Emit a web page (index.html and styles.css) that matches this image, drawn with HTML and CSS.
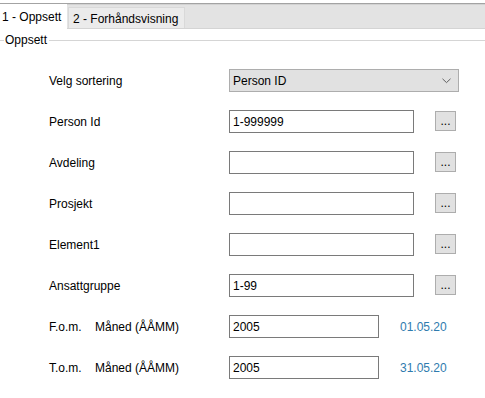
FILE: index.html
```html
<!DOCTYPE html>
<html lang="no">

<head>
  <meta charset="UTF-8">
  <title>Oppsett</title>
  <link rel="stylesheet" href="styles.css">
</head>

<body>
  <div class="tabstrip">
    <div class="tab active">1 - Oppsett</div>
    <div class="tab">2 - Forhåndsvisning</div>
  </div>

  <div class="group-title">
    <span class="line short"></span>
    <span class="title">Oppsett</span>
    <span class="line"></span>
  </div>

  <form class="form">
    <div class="row">
      <label class="lbl">Velg sortering</label>
      <div class="select">
        <span>Person ID</span>
        <svg width="9" height="6" viewBox="0 0 9 6">
          <polyline points="0.5,0.8 4.5,4.6 8.5,0.8" fill="none" stroke="#606060" stroke-width="1"/>
        </svg>
      </div>
    </div>

    <div class="row">
      <label class="lbl">Person Id</label>
      <input class="field" type="text" value="1-999999">
      <button class="pick" type="button">...</button>
    </div>

    <div class="row">
      <label class="lbl">Avdeling</label>
      <input class="field" type="text" value="">
      <button class="pick" type="button">...</button>
    </div>

    <div class="row">
      <label class="lbl">Prosjekt</label>
      <input class="field" type="text" value="">
      <button class="pick" type="button">...</button>
    </div>

    <div class="row">
      <label class="lbl">Element1</label>
      <input class="field" type="text" value="">
      <button class="pick" type="button">...</button>
    </div>

    <div class="row">
      <label class="lbl">Ansattgruppe</label>
      <input class="field" type="text" value="1-99">
      <button class="pick" type="button">...</button>
    </div>

    <div class="row">
      <label class="lbl"><span class="pre">F.o.m.</span>Måned (ÅÅMM)</label>
      <input class="field short" type="text" value="2005">
      <span class="date">01.05.20</span>
    </div>

    <div class="row">
      <label class="lbl"><span class="pre">T.o.m.</span>Måned (ÅÅMM)</label>
      <input class="field short" type="text" value="2005">
      <span class="date">31.05.20</span>
    </div>
  </form>
</body>

</html>
```

FILE: styles.css
```css
body {
  margin: 0;
  font: 12px/14px "Liberation Sans", Arial, sans-serif;
  color: #000;
  background: #fff;
}
.tabstrip {
  display: flex;
  align-items: flex-start;
  margin-top: 3px;
  height: 24px;
  background: #e3e3e3;
  border-top: 1px solid #a3a3a3;
  border-bottom: 1px solid #d4d4d4;
  box-shadow: inset 0 1px 0 #d2d2d2;
}
.tab {
  box-sizing: border-box;
  white-space: nowrap;
}
.tab.active {
  width: 67px;
  height: 25px;
  padding: 6px 0 0 2px;
  background: #fff;
  margin-right: 1px;
}
.tab:not(.active) {
  width: 117px;
  height: 21px;
  margin-top: 3px;
  padding: 4px 0 0 4px;
  background: #ebebeb;
  border: 1px solid #d9d9d9;
  border-bottom: none;
}
.group-title {
  display: flex;
  align-items: center;
  margin-top: 4px;
}
.group-title .line {
  flex: 1;
  height: 1px;
  background: #d5d5d5;
  margin-left: 2px;
}
.group-title .line.short {
  flex: none;
  width: 4px;
  margin: 0 1px 0 0;
}
.form {
  margin: 22px 0 0 0;
  padding-left: 49px;
}
.row {
  display: flex;
  align-items: center;
  height: 23px;
  margin-bottom: 18px;
}
.lbl {
  width: 180px;
  flex: none;
}
.lbl .pre {
  display: inline-block;
  width: 46px;
}
.select {
  box-sizing: border-box;
  display: flex;
  align-items: center;
  justify-content: space-between;
  width: 230px;
  height: 23px;
  padding: 0 7px 0 3px;
  background: #e1e1e1;
  border: 1px solid #adadad;
}
.select svg {
  margin-top: 1px;
}
.field {
  box-sizing: border-box;
  width: 185px;
  height: 23px;
  margin: 0;
  padding: 0 3px;
  font: inherit;
  color: #000;
  background: #fff;
  border: 1px solid #7a7a7a;
  border-radius: 0;
  outline: none;
}
.field.short {
  width: 150px;
}
.pick {
  box-sizing: border-box;
  width: 21px;
  height: 20px;
  margin: 0 0 1px 21px;
  padding: 0;
  font: 12px/14px "Liberation Sans", Arial, sans-serif;
  color: #000;
  background: #e1e1e1;
  border: 1px solid #adadad;
  border-radius: 0;
}
.date {
  margin-left: 21px;
  color: #2f7bae;
}
```
